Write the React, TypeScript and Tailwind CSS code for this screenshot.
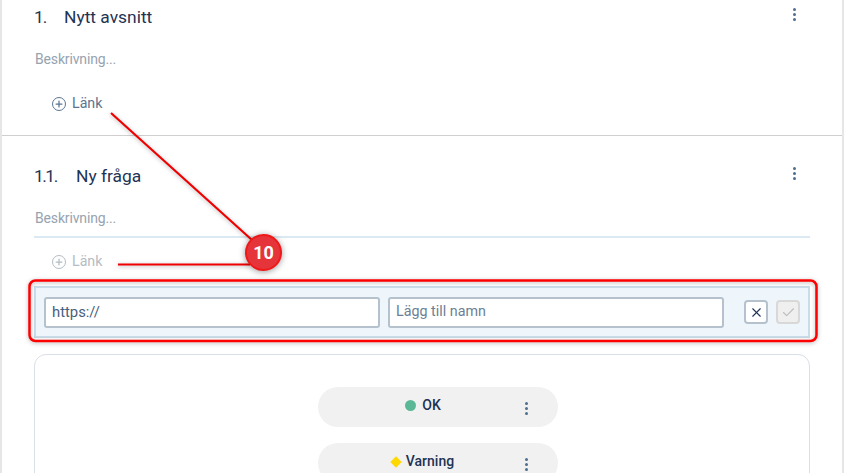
import { X, Check, Plus } from "lucide-react";

function Dots({ className }: { className?: string }) {
  return (
    <div className={`flex flex-col gap-[2px] ${className ?? ""}`}>
      <span className="w-[3px] h-[3px] rounded-full bg-[#4f6d8f]" />
      <span className="w-[3px] h-[3px] rounded-full bg-[#4f6d8f]" />
      <span className="w-[3px] h-[3px] rounded-full bg-[#4f6d8f]" />
    </div>
  );
}

function LinkButton({ muted }: { muted?: boolean }) {
  return (
    <div className={`flex items-center gap-[6px] pl-[18px] h-[20px] text-[14.2px] ${muted ? "text-[#b4bcc4]" : "text-[#5b7490]"}`}>
      <span className={`w-[14px] h-[14px] mt-[1px] rounded-full border-[1.5px] flex items-center justify-center ${muted ? "border-[#b4bcc4]" : "border-[#5b7490]"}`}>
        <Plus size={10} strokeWidth={3} />
      </span>
      <span className="mt-[1px]">Länk</span>
    </div>
  );
}

function Status({ children, top }: { children: React.ReactNode; top: string }) {
  return (
    <div className={`relative w-[240px] h-[40px] rounded-[20px] bg-[#f1f1f1] flex items-center justify-center ${top}`}>
      <div className="flex items-center gap-[6px] text-[14px] font-medium text-[#1e3355] mt-[-3px] mr-[30px]">{children}</div>
      <Dots className="absolute right-[30px] top-[15px]" />
    </div>
  );
}

export default function App() {
  return (
    <div className="relative w-[844px] h-[473px] overflow-hidden bg-white border-l-2 border-r-2 border-[#e6e6e6] font-['Roboto',sans-serif]">
      {/* section */}
      <div className="h-[136px] border-b border-[#cfcfcf] pl-[32px] pr-[32px] pt-[7px]">
        <div className="flex items-center h-[20px] text-[17.4px] font-[450] text-[#1e3355]">
          <span className="w-[30px] tracking-[-1px]">1.</span>
          <span>Nytt avsnitt</span>
          <Dots className="ml-auto mr-[14px] mt-[-6px]" />
        </div>
        <div className="pt-[22px] pl-[1px] text-[14px] tracking-[-0.15px] leading-[20px] text-[#97a3b0]">Beskrivning...</div>
        <div className="pt-[24px]">
          <LinkButton />
        </div>
      </div>

      {/* question */}
      <div className="pl-[32px] pr-[32px] pt-[30px]">
        <div className="flex items-center h-[20px] text-[17.4px] font-[450] text-[#1e3355]">
          <span className="w-[42px] tracking-[-1.5px]">1.1.</span>
          <span>Ny fråga</span>
          <Dots className="ml-auto mr-[14px] mt-[-6px]" />
        </div>
        <div className="mt-[22px] pl-[1px] pb-[8px] text-[14px] tracking-[-0.15px] leading-[20px] text-[#97a3b0] border-b-2 border-[#dbe9f2]">Beskrivning...</div>
        <div className="pt-[13px]">
          <LinkButton muted />
        </div>

        <div className="mt-[15px] h-[52px] border-2 border-[#c9dce8] bg-[#eff6fb] flex items-center pl-[8px] pr-[8px]">
          <div className="w-[336px] h-[31px] rounded-[3px] border-2 border-[#b5c1cc] bg-white pl-[6px] flex items-center text-[14.8px] text-[#47607c]">https://</div>
          <div className="ml-[8px] w-[336px] h-[31px] rounded-[3px] border-2 border-[#b5c1cc] bg-white pl-[6px] flex items-center text-[14.3px] text-[#6b7f94]">Lägg till namn</div>
          <div className="ml-[20px] w-[24px] h-[24px] rounded-[4px] border-2 border-[#b5c1cc] bg-white flex items-center justify-center text-[#1e3355]">
            <X size={15} strokeWidth={1.75} />
          </div>
          <div className="ml-[8px] w-[24px] h-[24px] rounded-[4px] border-2 border-[#d8d8d8] bg-[#efefef] flex items-center justify-center text-[#bdbdbd]">
            <Check size={15} strokeWidth={1.75} />
          </div>
        </div>

        <div className="mt-[16px] h-[200px] rounded-[12px] border border-[#d9dfe6] flex flex-col items-center pt-[32px] pl-[32px]">
          <Status top="">
            <span className="w-[11px] h-[11px] rounded-full bg-[#5bb896]" />
            <span>OK</span>
          </Status>
          <Status top="mt-[16px]">
            <span className="w-[8px] h-[8px] rotate-45 bg-[#ffd800]" />
            <span>Varning</span>
          </Status>
        </div>
      </div>

      {/* annotation */}
      <svg className="absolute left-[-2px] top-0 w-[844px] h-[473px] pointer-events-none drop-shadow-[0_1px_2px_rgba(0,0,0,0.3)]" viewBox="0 0 844 473" fill="none">
        <path d="M111 113 L252 240 M118 264.500 L250 264.500" stroke="#f00000" strokeWidth="2.2" />
        <rect x="29.500" y="280.500" width="787" height="60.500" rx="6" stroke="#f00" strokeWidth="2.500" />
      </svg>
      <div className="absolute left-[243px] top-[234px] w-[37px] h-[37px] rounded-full bg-[#e5343a] border-2 border-[#f01818] shadow-[0_1px_6px_rgba(0,0,0,0.4)] flex items-center justify-center text-white text-[18px] font-bold">10</div>
    </div>
  );
}
